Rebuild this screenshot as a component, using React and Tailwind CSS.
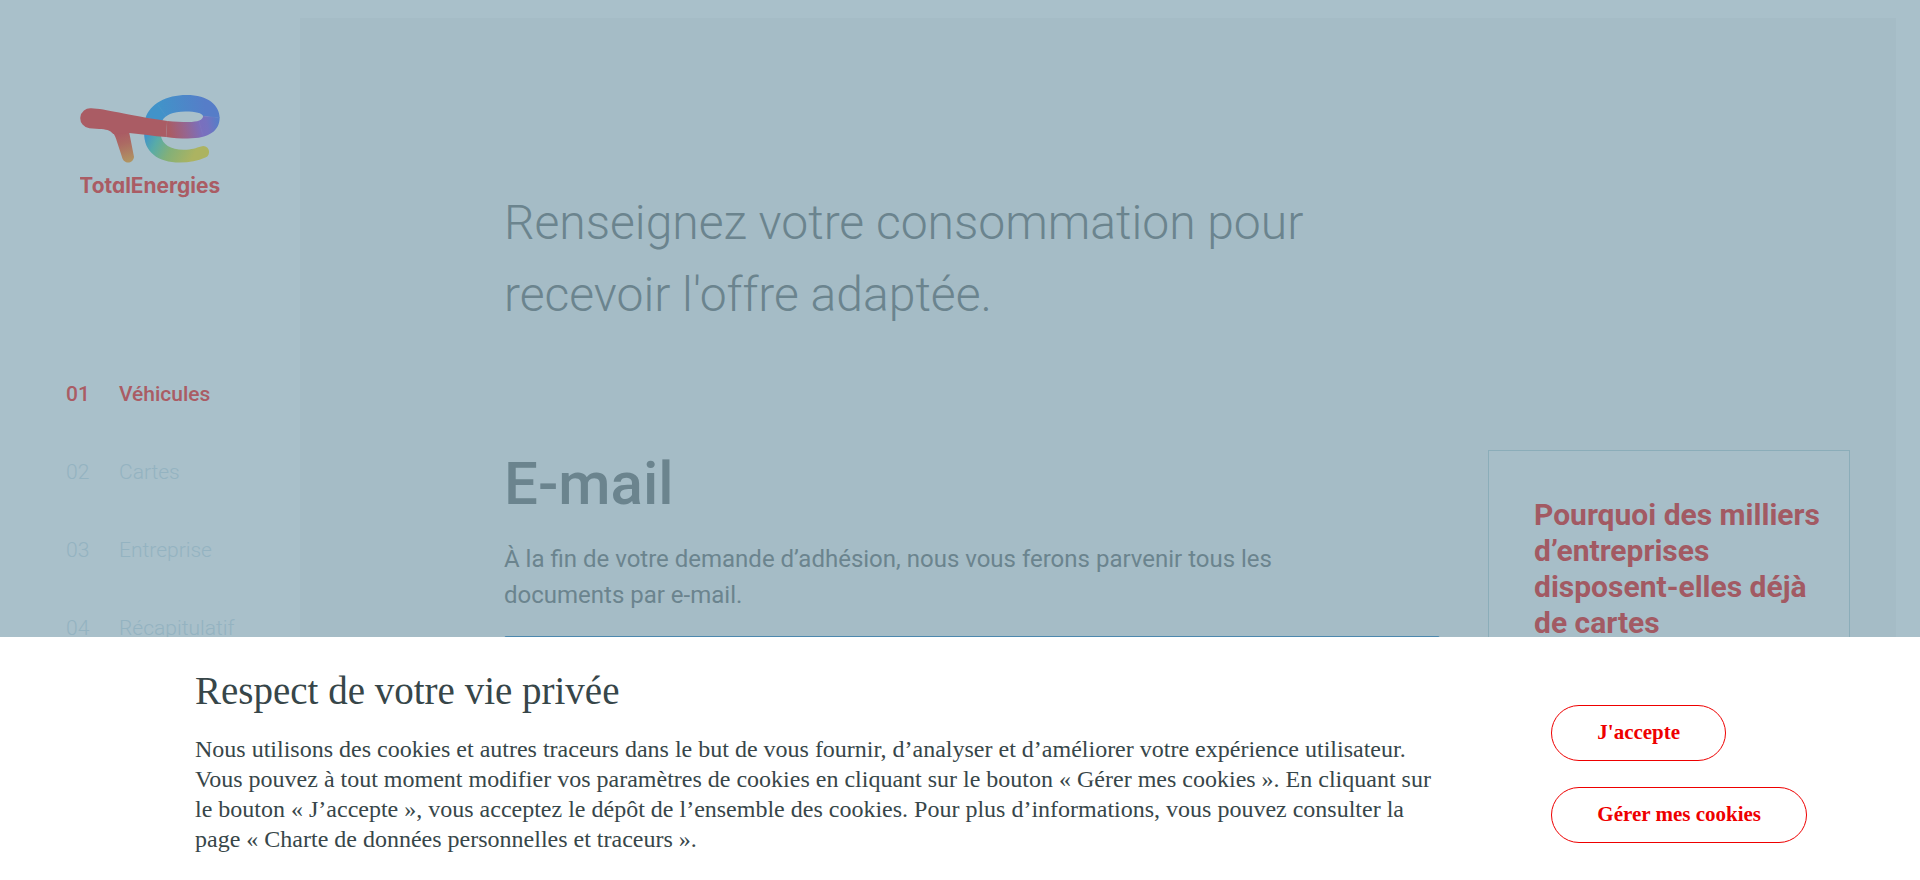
const steps = [
  { number: "01", label: "Véhicules", active: true },
  { number: "02", label: "Cartes" },
  { number: "03", label: "Entreprise" },
  { number: "04", label: "Récapitulatif" },
];

function Logo() {
  return (
    <svg viewBox="60 40 424 315" className="w-[141px]" role="img" aria-label="TotalEnergies">
      <defs>
        <linearGradient id="te-stem" gradientUnits="userSpaceOnUse" x1="180" y1="160" x2="204" y2="245">
          <stop offset="0" stopColor="#aa5c64" />
          <stop offset="0.35" stopColor="#ac6a63" />
          <stop offset="1" stopColor="#b09562" />
        </linearGradient>
        <linearGradient id="te-top" gradientUnits="userSpaceOnUse" x1="260" y1="110" x2="470" y2="80">
          <stop offset="0.2" stopColor="#4193c9" />
          <stop offset="0.85" stopColor="#567dc8" />
        </linearGradient>
        <linearGradient id="te-mid" gradientUnits="userSpaceOnUse" x1="320" y1="148" x2="475" y2="118">
          <stop offset="0.05" stopColor="#aa5c64" />
          <stop offset="0.35" stopColor="#97658e" />
          <stop offset="0.65" stopColor="#7a6fbd" />
          <stop offset="0.78" stopColor="#7572c0" />
          <stop offset="1" stopColor="#567dc8" />
        </linearGradient>
        <linearGradient id="te-low" gradientUnits="userSpaceOnUse" x1="255" y1="168" x2="395" y2="240">
          <stop offset="0" stopColor="#4193c9" />
          <stop offset="0.24" stopColor="#58aba8" />
          <stop offset="0.55" stopColor="#83b078" />
          <stop offset="1" stopColor="#acb361" />
        </linearGradient>
      </defs>
      <path
        fill="url(#te-low)"
        d="M253 155L303 165C307 191 332 208 372 208C396 208 409 202 424 198A17 17 0 0 1 437 231C414 241 390 246 360 246C295 246 251 215 253 155Z"
      />
      <path
        fill="url(#te-top)"
        d="M257 112C270 70 320 43 380 43C446 43 480 75 480 112L430 107C428 98 408 93 377 93C338 93 316 104 307 121Z"
      />
      <path
        fill="url(#te-mid)"
        d="M480 111C480 150 450 174 384 174C362 174 340 172 319 169L322 121C346 123 366 124 385 124C415 124 430 118 430 106Z"
      />
      <path
        fill="url(#te-stem)"
        d="M158 150L208 156L221 222A17 17 0 0 1 188 235L172 186C168 172 164 162 158 156Z"
      />
      <path
        fill="#aa5c64"
        d="M94 83C135 84 200 104 322 121L319 169C280 166 245 161 208 157L160 160C150 148 138 146 118 145L88 143A30 30 0 0 1 94 83Z"
      />
      <path
        fill="none"
        stroke="#a9c0ca"
        strokeOpacity="0.2"
        strokeWidth="1"
        d="M322 121L319 169M294 72L319 107M430 106L480 112M418 122L430 165"
      />
      <text
        x="58"
        y="337"
        fontSize="63"
        fontWeight="700"
        fill="#aa5c64"
        className="font-['Inter',sans-serif] [font-feature-settings:'cv11']"
      >
        TotalEnergies
      </text>
    </svg>
  );
}

function Sidebar() {
  return (
    <aside className="w-[300px] shrink-0">
      <a href="#accueil" className="mt-[94px] ml-20 block w-[141px]">
        <Logo />
      </a>
      <nav aria-label="Étapes" className="mt-[180px] pl-[66px]">
        <ol className="flex flex-col gap-12 text-[21px] leading-[30px]">
          {steps.map((step) => (
            <li key={step.number}>
              <a
                href={`#etape-${step.number}`}
                aria-current={step.active ? "step" : undefined}
                className={step.active ? "flex font-medium text-[#aa5c64]" : "flex font-light text-[#94b3c1]"}
              >
                <span className="w-[53px]">{step.number}</span>
                <span>{step.label}</span>
              </a>
            </li>
          ))}
        </ol>
      </nav>
    </aside>
  );
}

function CookieBanner() {
  const button =
    "h-14 cursor-pointer rounded-full border border-[#ee0000] bg-white px-[45px] text-[21px] font-bold text-[#ee0000]";
  return (
    <section
      aria-labelledby="cookies-title"
      className="fixed inset-x-0 bottom-0 flex gap-[108px] bg-white pr-[113px] pb-[26px] pl-[195px] font-['Liberation_Serif',serif] text-[#374649]"
    >
      <div className="flex-1 pt-[30px]">
        <h2 id="cookies-title" className="text-[39px] leading-[48px]">
          Respect de votre vie privée
        </h2>
        <p className="mt-[19px] text-[24px] leading-[30px]">
          Nous utilisons des cookies et autres traceurs dans le but de vous fournir, d’analyser et d’améliorer votre
          expérience utilisateur. Vous pouvez à tout moment modifier vos paramètres de cookies en cliquant sur le
          bouton « Gérer mes cookies ». En cliquant sur le bouton « J’accepte », vous acceptez le dépôt de l’ensemble
          des cookies. Pour plus d’informations, vous pouvez consulter la page « Charte de données personnelles et
          traceurs ».
        </p>
      </div>
      <div className="flex shrink-0 flex-col items-start gap-[26px] pt-[68px]">
        <button type="button" className={button}>
          J'accepte
        </button>
        <button type="button" className={button}>
          Gérer mes cookies
        </button>
      </div>
    </section>
  );
}

export default function App() {
  return (
    <div className="flex min-h-screen bg-[#a9c0ca] font-['Roboto',sans-serif] text-[#6b848e]">
      <Sidebar />
      <main className="mt-[18px] mr-6 flex-1 bg-[#a5bcc6] pt-[169px] pr-[46px] pl-[204px]">
        <h1 className="max-w-[936px] text-[48px] leading-[72px] font-light">
          Renseignez votre consommation pour recevoir l'offre adaptée.
        </h1>
        <div className="mt-[117px] flex items-start gap-12">
          <section className="flex-1">
            <h2 className="text-[60px] leading-[72px] font-medium">
              <label htmlFor="email">E-mail</label>
            </h2>
            <p className="mt-[21px] max-w-[840px] text-[24px] leading-[36px]">
              À la fin de votre demande d’adhésion, nous vous ferons parvenir tous les documents par e-mail.
            </p>
            <input
              id="email"
              type="email"
              className="mt-[23px] h-[60px] w-full rounded-xs border border-[#4c88ae] bg-[#a9c0ca] px-6 text-[24px]"
            />
          </section>
          <aside className="mt-[2px] w-[362px] shrink-0 border border-[#8badb9] bg-[#a7bec8] pt-[46px] pr-6 pb-12 pl-[45px]">
            <h2 className="text-[30px] leading-[36px] font-bold text-[#a25a63]">
              Pourquoi des milliers d’entreprises disposent-elles déjà de cartes
            </h2>
          </aside>
        </div>
      </main>
      <CookieBanner />
    </div>
  );
}
